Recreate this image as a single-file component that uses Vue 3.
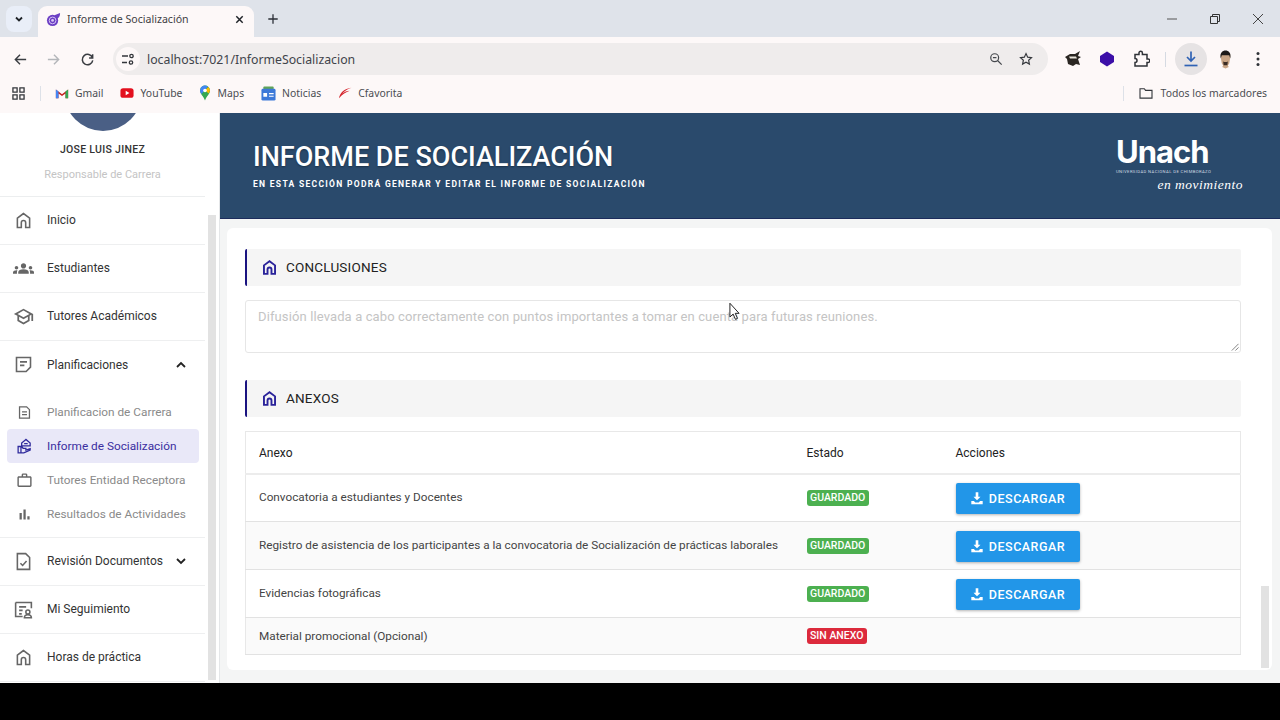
<template>
  <div class="screen">
    <!-- barra de pestañas -->
    <div class="tabstrip">
      <button class="tab-list">
        <svg viewBox="0 0 12 12" class="ic12"><path d="M3 4.500 6 7.500 9 4.500" fill="none" stroke="#1f2328" stroke-width="1.800" /></svg>
      </button>
      <div class="tab">
        <svg viewBox="0 0 16 16" class="favicon">
          <circle cx="7" cy="9" r="6" fill="#6c3fc4" />
          <circle cx="7" cy="9" r="3.600" fill="none" stroke="#d9c9f5" stroke-width="1" />
          <circle cx="7" cy="9" r="1.500" fill="#d9c9f5" />
          <path d="M9 3.500 15 1c0 3-1 5-3 6z" fill="#6c3fc4" />
        </svg>
        <span class="tab-title">Informe de Socialización</span>
        <svg viewBox="0 0 12 12" class="tab-close"><path d="M2.500 2.500l7 7M9.500 2.500l-7 7" stroke="#1f2328" stroke-width="1.600" /></svg>
      </div>
      <svg viewBox="0 0 14 14" class="tab-plus"><path d="M7 1.500v11M1.500 7h11" stroke="#2b2f36" stroke-width="1.500" /></svg>
      <div class="win-controls">
        <svg viewBox="0 0 12 12" class="ic12"><path d="M1 6h10" stroke="#555" stroke-width="1" /></svg>
        <svg viewBox="0 0 12 12" class="ic12"><path d="M1.500 3.500h7v7h-7zM3.500 3.500v-2h7v7h-2" fill="none" stroke="#333" stroke-width="1" /></svg>
        <svg viewBox="0 0 12 12" class="ic12"><path d="M1 1l10 10M11 1 1 11" stroke="#444" stroke-width="1" /></svg>
      </div>
    </div>

    <!-- barra de direcciones -->
    <div class="toolbar">
      <svg viewBox="0 0 16 16" class="nav-btn"><path d="M14 8H2.500M7.500 3l-5 5 5 5" fill="none" stroke="#3a3d42" stroke-width="1.500" /></svg>
      <svg viewBox="0 0 16 16" class="nav-btn forward"><path d="M2 8h11.500M8.500 3l5 5-5 5" fill="none" stroke="#b4b6ba" stroke-width="1.500" /></svg>
      <svg viewBox="0 0 16 16" class="nav-btn reload"><path d="M13.300 6A5.600 5.600 0 1 0 13.600 9M13.500 2.500V6.300H9.700" fill="none" stroke="#3a3d42" stroke-width="1.600" /></svg>
      <div class="omnibox">
        <span class="site-settings">
          <svg viewBox="0 0 14 14" class="ic14"><path d="M1 4h6M1 10.500h5" stroke="#33363b" stroke-width="1.400" fill="none" /><circle cx="10.500" cy="4" r="1.700" fill="none" stroke="#33363b" stroke-width="1.300" /><circle cx="10" cy="10.500" r="1.700" fill="none" stroke="#33363b" stroke-width="1.300" /></svg>
        </span>
        <span class="url">localhost:7021/InformeSocializacion</span>
        <svg viewBox="0 0 16 16" class="omni-zoom"><circle cx="6.500" cy="6.500" r="4.500" fill="none" stroke="#45484d" stroke-width="1.400" /><path d="M10 10l4.500 4.500M4.500 6.500h4" stroke="#45484d" stroke-width="1.400" /></svg>
        <svg viewBox="0 0 16 16" class="omni-star"><path d="M8 1.800l1.900 4.100 4.400.5-3.300 3 .9 4.400L8 11.600l-3.900 2.200.9-4.400-3.300-3 4.400-.5z" fill="none" stroke="#33363b" stroke-width="1.300" /></svg>
      </div>
      <svg viewBox="0 0 18 18" class="ext first"><path d="M1 7l5-3 5 0 5-3-2 5 3 1-3 2 2 6-4-1-3 2-5-2-1-5z" fill="#2a2622" /><path d="M5 6.500h7l1 2H6z" fill="#e8e4da" /></svg>
      <svg viewBox="0 0 18 18" class="ext"><path d="M9 1.500 16 6v6l-7 4.500L2 12V6z" fill="#3c0fa8" /></svg>
      <svg viewBox="0 0 18 18" class="ext"><path d="M3 4.500h4V3a1.700 1.700 0 0 1 3.400 0v1.500H15V9h1a1.800 1.800 0 0 1 0 3.600h-1V16H3v-3.500a2 2 0 0 0 0-4z" fill="none" stroke="#2f3237" stroke-width="1.500" /></svg>
      <span class="tool-sep"></span>
      <span class="download-btn">
        <svg viewBox="0 0 18 18" class="ic18"><path d="M9 1.500v9M5 7l4 4 4-4" fill="none" stroke="#2f62b4" stroke-width="1.700" /><path d="M2.500 15.500h13" stroke="#2f62b4" stroke-width="1.700" /></svg>
      </span>
      <svg viewBox="0 0 16 20" class="avatar"><path d="M8 1c4 0 5.500 2.500 5 7l-1 6-1.500 2.500 1 1.500-3.500 1.500L4.500 18l1-1.500L4 14 3 8C2.500 3.500 4 1 8 1z" fill="#c9a585" /><path d="M3 9C1.500 3 5 .5 8 .5S14.500 3 13 9l-1-3.500H4z" fill="#1d1a18" /><path d="M5.500 12c1.500 1 3.500 1 5 0l-.5 4H6z" fill="#3a2c24" /></svg>
      <svg viewBox="0 0 4 16" class="kebab"><circle cx="2" cy="2.500" r="1.500" /><circle cx="2" cy="8" r="1.500" /><circle cx="2" cy="13.500" r="1.500" /></svg>
    </div>

    <!-- marcadores -->
    <div class="bookmarks">
      <svg viewBox="0 0 14 14" class="apps"><path d="M1 1h4.500v4.500H1zM8.500 1H13v4.500H8.500zM1 8.500h4.500V13H1zM8.500 8.500H13V13H8.500z" fill="none" stroke="#33363b" stroke-width="1.400" /></svg>
      <span class="bm-sep"></span>
      <span class="bm gmail">
        <svg viewBox="0 0 16 12" class="bm-ic"><path d="M1 12V2l7 5.300L15 2v10h-3V6.500L8 9.500 4 6.500V12z" fill="#c5221f" /><path d="M1 12V2l3 2.200V12z" fill="#4285f4" /><path d="M15 12V2l-3 2.200V12z" fill="#34a853" /></svg>
        Gmail
      </span>
      <span class="bm youtube">
        <svg viewBox="0 0 16 12" class="bm-ic"><rect x="0.500" y="0.500" width="15" height="11" rx="3" fill="#e3101e" /><path d="M6.500 3.500 10.800 6l-4.300 2.500z" fill="#fff" /></svg>
        YouTube
      </span>
      <span class="bm maps">
        <svg viewBox="0 0 12 16" class="bm-ic pin"><path d="M6 0.500a5 5 0 0 1 5 5c0 3.500-3.500 5.500-5 10-1.500-4.500-5-6.500-5-10a5 5 0 0 1 5-5z" fill="#34a853" /><path d="M2 2.500a5 5 0 0 1 7-1L2.500 9C1.500 7.500 1 6.500 1 5.500z" fill="#4285f4" /><path d="M9.500 2 11 5c0 1-.5 2-1.500 3.500L6 5z" fill="#fbbc04" /><circle cx="6" cy="5.500" r="1.800" fill="#fff" /></svg>
        Maps
      </span>
      <span class="bm news">
        <svg viewBox="0 0 16 16" class="bm-ic square"><rect x="2.500" y="0.500" width="11" height="4" rx="1" fill="#5fa35a" /><rect x="0.500" y="3" width="15" height="12.500" rx="1.500" fill="#3c78d8" /><path d="M2.500 7.500h4v4h-4zM8.500 7.500h5v1.200h-5zM8.500 10.300h5v1.200h-5z" fill="#fff" /></svg>
        Noticias
      </span>
      <span class="bm cfavorita">
        <svg viewBox="0 0 16 14" class="bm-ic"><path d="M1 13C2 7 7 2 15.500 1 11 2.500 7 5 4.500 8c3-2.500 6-3.500 9-3.500C9 6 5 8.500 1 13z" fill="#d4232b" /></svg>
        Cfavorita
      </span>
      <span class="bm-sep right"></span>
      <span class="bm all">
        <svg viewBox="0 0 16 14" class="bm-ic"><path d="M1 2h5l1.500 2H15v9H1z" fill="none" stroke="#33363b" stroke-width="1.300" /></svg>
        Todos los marcadores
      </span>
    </div>

    <div class="app">
      <!-- menu lateral -->
      <aside class="sidebar">
        <div class="profile">
          <div class="photo"></div>
          <div class="user-name">JOSE LUIS JINEZ</div>
          <div class="user-role">Responsable de Carrera</div>
        </div>
        <nav class="menu">
          <template v-for="item in menu" :key="item.label">
            <div class="menu-item" :class="{ open: item.children }">
              <svg viewBox="0 0 24 24" class="menu-icon"><path :d="icons[item.icon]" :class="item.icon" /></svg>
              <span class="menu-label">{{ item.label }}</span>
              <svg v-if="item.chevron" viewBox="0 0 12 12" class="chevron">
                <path :d="item.chevron === 'up' ? 'M2 8l4-4 4 4' : 'M2 4l4 4 4-4'" />
              </svg>
            </div>
            <div v-if="item.children" class="submenu">
              <div
                v-for="sub in item.children"
                :key="sub.label"
                class="submenu-item"
                :class="{ active: sub.active }"
              >
                <svg viewBox="0 0 24 24" class="sub-icon"><path :d="icons[sub.icon]" :class="sub.icon" /></svg>
                <span>{{ sub.label }}</span>
              </div>
            </div>
          </template>
        </nav>
        <div class="side-scroll"></div>
      </aside>

      <main class="content">
        <header class="banner">
          <div class="banner-text">
            <h1>INFORME DE SOCIALIZACIÓN</h1>
            <p>EN ESTA SECCIÓN PODRÁ GENERAR Y EDITAR EL INFORME DE SOCIALIZACIÓN</p>
          </div>
          <div class="logo">
            <div class="logo-name">Unach</div>
            <div class="logo-sub">UNIVERSIDAD NACIONAL DE CHIMBORAZO</div>
            <div class="logo-slogan">en movimiento</div>
          </div>
        </header>

        <section class="card">
          <div class="section-title">
            <svg viewBox="0 0 24 24" class="title-icon"><path :d="icons.home" class="home" /></svg>
            CONCLUSIONES
          </div>
          <div class="conclusion">
            Difusión llevada a cabo correctamente con puntos importantes a tomar en cuenta para futuras reuniones.
            <svg viewBox="0 0 10 10" class="resize-grip"><path d="M9.500 2 2 9.500M9.500 6 6 9.500" stroke="#777" stroke-width="1" /></svg>
          </div>

          <div class="section-title annex">
            <svg viewBox="0 0 24 24" class="title-icon"><path :d="icons.home" class="home" /></svg>
            ANEXOS
          </div>
          <table class="annex-table">
            <thead>
              <tr>
                <th class="col-name">Anexo</th>
                <th class="col-state">Estado</th>
                <th>Acciones</th>
              </tr>
            </thead>
            <tbody>
              <tr v-for="row in anexos" :key="row.name" :class="{ short: !row.saved }">
                <td>{{ row.name }}</td>
                <td class="state-cell">
                  <span class="badge" :class="row.saved ? 'ok' : 'missing'">{{ row.saved ? 'GUARDADO' : 'SIN ANEXO' }}</span>
                </td>
                <td class="action-cell">
                  <button v-if="row.saved" class="download">
                    <svg viewBox="0 0 16 16" class="download-icon"><path d="M6.500 1.500h3v5H12L8 10.500 4 6.500h2.500zM1.500 11.500h3L6 13h4l1.500-1.500h3V15h-13z" /></svg>
                    DESCARGAR
                  </button>
                </td>
              </tr>
            </tbody>
          </table>
        </section>
        <div class="main-scroll"></div>
      </main>

      <!-- puntero del video -->
      <svg viewBox="0 0 12 20" class="cursor"><path d="M1 1v15l3.500-3.200L7 18.500l2.300-1-2.500-5.500H11z" fill="#fff" stroke="#111" stroke-width="1" /></svg>
    </div>

    <div class="black-bar"></div>
  </div>
</template>

<script setup>
const icons = {
  home: 'M12 4 5 9.300V20h4.500v-5.500a2.500 2.500 0 0 1 5 0V20H19V9.300z',
  groups:
    'M12 12.750c1.630 0 3.070.390 4.240.900 1.080.480 1.760 1.560 1.760 2.730V18H6v-1.610c0-1.180.680-2.260 1.760-2.730 1.170-.520 2.610-.910 4.240-.910zM4 13c1.100 0 2-.900 2-2s-.900-2-2-2-2 .900-2 2 .900 2 2 2zm1.130 1.100C4.760 14.040 4.390 14 4 14c-.990 0-1.930.210-2.780.580C.480 14.900 0 15.620 0 16.430V18h4.500v-1.610c0-.830.230-1.610.630-2.290zM20 13c1.100 0 2-.900 2-2s-.900-2-2-2-2 .900-2 2 .900 2 2 2zm4 3.430c0-.810-.480-1.530-1.220-1.850C21.930 14.210 20.990 14 20 14c-.390 0-.760.040-1.130.100.400.680.630 1.460.630 2.290V18H24v-1.570zM12 6c1.660 0 3 1.340 3 3s-1.340 3-3 3-3-1.340-3-3 1.340-3 3-3z',
  school:
    'M12 3 1 9l4 2.180v6L12 21l7-3.820v-6l2-1.090V17h2V9L12 3zm6.820 6L12 12.720 5.180 9 12 5.280 18.820 9zM17 15.990l-5 2.730-5-2.730v-3.720L12 15l5-2.730v3.720z',
  note: 'M4 4h16v11l-5 5H4zM8 9h8M8 13h5',
  article: 'M5 4h10l4 4v12H5zM8.500 11h7M8.500 15h7',
  report:
    'M14 2 8 7v4h12V7zM11.500 8h5M3 12h5l2 2.500h4V17l6-2v2l-9 4H3zM7 12v9',
  work: 'M20 6h-4V4c0-1.110-.890-2-2-2h-4c-1.110 0-2 .890-2 2v2H4c-1.110 0-1.990.890-1.990 2L2 19c0 1.110.890 2 2 2h16c1.110 0 2-.890 2-2V8c0-1.110-.890-2-2-2zm-6 0h-4V4h4v2zm6 13H4V8h16v11z',
  bars: 'M5 10h3.200v9H5zM10.500 5h3.200v14h-3.200zM16 14.500h3.200V19H16z',
  doc: 'M5 3h9.500L19 7.500V21H5zM8.500 14l2.500 2.500 4.500-5',
  tracking:
    'M3 4h18v6.500M3 4v16h8M7 9h8M7 13h4M7 17h3M17 12.500a2.300 2.300 0 0 1 0 4.600 2.300 2.300 0 0 1 0-4.600zM13 21.500c0-2.500 2-3.500 4-3.500s4 1 4 3.500z'
}

const menu = [
  { label: 'Inicio', icon: 'home' },
  { label: 'Estudiantes', icon: 'groups' },
  { label: 'Tutores Académicos', icon: 'school' },
  {
    label: 'Planificaciones',
    icon: 'note',
    chevron: 'up',
    children: [
      { label: 'Planificacion de Carrera', icon: 'article' },
      { label: 'Informe de Socialización', icon: 'report', active: true },
      { label: 'Tutores Entidad Receptora', icon: 'work' },
      { label: 'Resultados de Actividades', icon: 'bars' }
    ]
  },
  { label: 'Revisión Documentos', icon: 'doc', chevron: 'down' },
  { label: 'Mi Seguimiento', icon: 'tracking' },
  { label: 'Horas de práctica', icon: 'home' }
]

const anexos = [
  { name: 'Convocatoria a estudiantes y Docentes', saved: true },
  { name: 'Registro de asistencia de los participantes a la convocatoria de Socialización de prácticas laborales', saved: true },
  { name: 'Evidencias fotográficas', saved: true },
  { name: 'Material promocional (Opcional)', saved: false }
]
</script>

<style>
html,
body {
  margin: 0;
  background: #000;
}
</style>

<style scoped>
.screen {
  width: 1280px;
  height: 720px;
  display: flex;
  flex-direction: column;
  overflow: hidden;
  font-family: Roboto, "Liberation Sans", sans-serif;
  color: #222;
}
.ic12 {
  width: 12px;
  height: 12px;
}
.ic14 {
  width: 14px;
  height: 14px;
}
.ic18 {
  width: 18px;
  height: 18px;
}

/* pestañas */
.tabstrip {
  height: 37px;
  flex: none;
  background: #dfe3ea;
  display: flex;
  align-items: flex-end;
  padding-left: 6px;
  box-sizing: border-box;
}
.tab-list {
  width: 26px;
  height: 26px;
  margin-bottom: 5px;
  border: none;
  padding: 0;
  border-radius: 8px;
  background: #e9eef8;
  display: flex;
  align-items: center;
  justify-content: center;
}
.tab {
  width: 216px;
  height: 31px;
  margin-left: 6px;
  background: #fdf8f8;
  border-radius: 9px 9px 0 0;
  display: flex;
  align-items: center;
  padding: 0 9px 5px 8px;
  box-sizing: border-box;
}
.favicon {
  width: 15px;
  height: 15px;
  flex: none;
}
.tab-title {
  margin-left: 6px;
  font-family: "Noto Sans", sans-serif;
  font-size: 10.600px;
  color: #3d4043;
  flex: 1;
  white-space: nowrap;
}
.tab-close {
  width: 11px;
  height: 11px;
  flex: none;
}
.tab-plus {
  width: 12px;
  height: 12px;
  margin: 0 0 12px 13px;
}
.win-controls {
  margin-left: auto;
  margin-bottom: 12px;
  width: 98px;
  margin-right: 16px;
  display: flex;
  justify-content: space-between;
}

/* barra de direcciones */
.toolbar {
  height: 44px;
  flex: none;
  background: #fdf8f8;
  display: flex;
  align-items: center;
}
.nav-btn {
  width: 15px;
  height: 15px;
  margin-left: 13px;
  flex: none;
}
.nav-btn.forward {
  margin-left: 18px;
}
.nav-btn.reload {
  margin-left: 19px;
}
.omnibox {
  width: 935px;
  height: 32px;
  margin-left: 18px;
  border-radius: 16px;
  background: #efecec;
  display: flex;
  align-items: center;
  flex: none;
}
.site-settings {
  width: 24px;
  height: 24px;
  margin-left: 3px;
  border-radius: 50%;
  background: #fdf8f8;
  display: flex;
  align-items: center;
  justify-content: center;
}
.url {
  margin-left: 7px;
  font-family: "Noto Sans", sans-serif;
  font-size: 12.300px;
  color: #40434a;
  flex: 1;
}
.omni-zoom,
.omni-star {
  width: 14px;
  height: 14px;
  flex: none;
}
.omni-star {
  margin: 0 15px 0 16px;
}
.ext {
  width: 18px;
  height: 18px;
  margin-left: 16px;
  flex: none;
}
.tool-sep {
  width: 1px;
  height: 15px;
  background: #d5dae2;
  margin-left: 15px;
}
.download-btn {
  width: 32px;
  height: 32px;
  margin-left: 9px;
  border-radius: 50%;
  background: #e6e3e4;
  display: flex;
  align-items: center;
  justify-content: center;
  flex: none;
}
.avatar {
  width: 15px;
  height: 19px;
  margin-left: 11px;
  flex: none;
}
.kebab {
  width: 4px;
  height: 16px;
  margin-left: 23px;
  fill: #2f3237;
  flex: none;
}

/* marcadores */
.bookmarks {
  height: 32px;
  flex: none;
  background: #fdf8f8;
  display: flex;
  align-items: center;
  font-family: "Noto Sans", sans-serif;
  font-size: 10.400px;
  color: #4a4d52;
  padding: 0 0 8px 12px;
  box-sizing: border-box;
}
.apps {
  width: 13px;
  height: 13px;
  flex: none;
}
.bm-sep {
  width: 1px;
  height: 15px;
  background: #dde1e8;
  margin: 0 14px 0 15px;
}
.bm-sep.right {
  margin: 0 15px 0 auto;
}
.bm {
  display: flex;
  align-items: center;
  gap: 6px;
  white-space: nowrap;
  margin-right: 17px;
}
.bm.all {
  gap: 8px;
  margin-right: 13px;
}
.bm-ic {
  width: 14px;
  height: 12px;
  flex: none;
}
.bm-ic.pin {
  width: 12px;
  height: 16px;
}
.bm-ic.square {
  width: 15px;
  height: 15px;
}

/* aplicacion */
.app {
  height: 570px;
  flex: none;
  display: flex;
  position: relative;
  overflow: hidden;
}
.sidebar {
  width: 220px;
  flex: none;
  background: #fff;
  position: relative;
  overflow: hidden;
  border-right: 1px solid #e4e6e8;
  box-sizing: border-box;
}
.profile {
  display: flow-root;
  height: 84px;
  border-bottom: 1px solid #eceeef;
  box-sizing: border-box;
  width: 205px;
  text-align: center;
}
.photo {
  width: 78px;
  height: 78px;
  border-radius: 50%;
  background: #4a5f85;
  margin: -60px auto 0;
}
.user-name {
  margin-top: 13px;
  font-size: 10.500px;
  line-height: 12px;
  font-weight: 500;
  letter-spacing: 0.300px;
  color: #333;
}
.user-role {
  margin-top: 13px;
  font-size: 11px;
  line-height: 12px;
  color: #c4c4c4;
}
.menu {
  width: 205px;
}
.menu-item {
  height: 48px;
  display: flex;
  align-items: center;
  border-bottom: 1px solid #eeeff0;
  box-sizing: border-box;
  padding: 0 0 1px 13px;
  font-size: 12px;
  color: #333;
}
.menu-item.open {
  border-bottom: none;
}
.menu-icon {
  width: 21px;
  height: 21px;
  flex: none;
}
.menu-label {
  margin-left: 13px;
}
.home,
.note,
.article,
.doc,
.tracking,
.report {
  fill: none;
  stroke: #666;
  stroke-width: 1.800;
}
.groups,
.school,
.work,
.bars {
  fill: #666;
}
.chevron {
  width: 12px;
  height: 12px;
  margin-left: auto;
  margin-right: 18px;
  fill: none;
  stroke: #222;
  stroke-width: 1.800;
}
.submenu {
  padding: 6px 0 6px 7px;
  border-bottom: 1px solid #eeeff0;
}
.submenu-item {
  width: 192px;
  height: 34px;
  display: flex;
  align-items: center;
  font-size: 11.800px;
  color: #8a8a8a;
  padding-left: 9px;
  box-sizing: border-box;
  border-radius: 4px;
}
.submenu-item span {
  margin-left: 14px;
  white-space: nowrap;
}
.sub-icon {
  width: 17px;
  height: 17px;
  flex: none;
}
.submenu-item.active {
  background: #e9e8f8;
  color: #3a2ea0;
}
.submenu-item.active .report {
  stroke: #2f2a9c;
}
.side-scroll {
  position: absolute;
  left: 208px;
  top: 102px;
  width: 8px;
  height: 465px;
  background: #e2e2e2;
}

/* contenido */
.content {
  flex: 1;
  background: #f4f5f5;
  position: relative;
  min-width: 0;
}
.banner {
  height: 106px;
  background: #2a4a6c;
  border-bottom: 1px solid #1c2c5c;
  box-sizing: border-box;
  display: flex;
  align-items: flex-start;
  justify-content: space-between;
  padding: 0 37px 0 33px;
  color: #fff;
}
.banner-text h1 {
  margin: 29px 0 0;
  font-size: 27px;
  line-height: 30px;
  font-weight: 500;
  white-space: nowrap;
  text-shadow: 0 1px 2px rgba(0, 0, 0, 0.35);
}
.banner-text p {
  margin: 6px 0 0;
  font-size: 8.500px;
  line-height: 12px;
  font-weight: 700;
  letter-spacing: 1.300px;
  white-space: nowrap;
}
.logo {
  width: 127px;
  margin-top: 22px;
}
.logo-name {
  font-family: Inter, sans-serif;
  font-weight: 700;
  font-size: 31px;
  line-height: 34px;
  letter-spacing: -1px;
}
.logo-sub {
  font-size: 4.200px;
  line-height: 6px;
  letter-spacing: 0.400px;
  white-space: nowrap;
  color: #cfd8e2;
}
.logo-slogan {
  font-family: "Liberation Serif", serif;
  font-style: italic;
  font-size: 13.500px;
  line-height: 15px;
  margin-top: 2px;
  text-align: right;
  letter-spacing: 0.500px;
}
.card {
  width: 1045px;
  height: 442px;
  margin: 9px 0 0 7px;
  background: #fff;
  border-radius: 6px;
  padding: 21px 31px 0 18px;
  box-sizing: border-box;
}
.section-title {
  height: 37px;
  background: #f5f5f5;
  border-left: 2px solid #1a1380;
  border-radius: 2px;
  box-sizing: border-box;
  display: flex;
  align-items: center;
  padding: 0 0 2px 13px;
  font-size: 13.500px;
  font-weight: 400;
  letter-spacing: 0.200px;
  color: #222;
}
.section-title.annex {
  margin-top: 27px;
}
.title-icon {
  width: 19px;
  height: 19px;
  margin: 2px 7px 0 0;
  flex: none;
}
.title-icon .home {
  stroke: #2a239a;
  stroke-width: 2.400;
}
.conclusion {
  height: 53px;
  margin-top: 14px;
  border: 1px solid #e6e6e6;
  border-radius: 3px;
  box-sizing: border-box;
  padding: 8px 12px;
  font-size: 13px;
  line-height: 16px;
  letter-spacing: 0.120px;
  color: #c4c4c4;
  position: relative;
}
.resize-grip {
  position: absolute;
  right: 1px;
  bottom: 1px;
  width: 9px;
  height: 9px;
}
.annex-table {
  width: 100%;
  table-layout: fixed;
  margin-top: 14px;
  border-collapse: collapse;
  border: 1px solid #e8e8e8;
  font-size: 11.750px;
  color: #444;
}
.annex-table th {
  height: 42px;
  padding: 1px 0 0 13px;
  text-align: left;
  font-size: 12px;
  font-weight: 400;
  color: #222;
  border-bottom: 2px solid #ececec;
  box-sizing: border-box;
}
.annex-table th.col-name {
  width: 548px;
}
.annex-table th.col-state {
  width: 149px;
}
.annex-table td {
  height: 48px;
  padding: 0 0 2px 13px;
  border-bottom: 1px solid #e2e2e2;
  box-sizing: border-box;
  white-space: nowrap;
}
.annex-table td.state-cell,
.annex-table td.action-cell {
  padding-bottom: 0;
}
.annex-table tbody tr:nth-child(even) {
  background: #fafafa;
}
.annex-table tr.short td {
  height: 37px;
  padding-bottom: 1px;
}
.badge {
  display: inline-block;
  height: 16px;
  line-height: 16px;
  padding: 0 3.500px;
  border-radius: 3px;
  font-size: 10.500px;
  font-weight: 500;
  color: #fff;
  vertical-align: middle;
}
.badge.ok {
  background: #4cb050;
}
.badge.missing {
  background: #dc2a3c;
}
.download {
  width: 124px;
  height: 31px;
  margin-top: 1px;
  border: none;
  border-radius: 2px;
  background: #2296e8;
  color: #fff;
  font-family: inherit;
  font-size: 12.500px;
  font-weight: 500;
  letter-spacing: 0.500px;
  display: flex;
  align-items: center;
  justify-content: center;
  gap: 5px;
  padding: 0;
  box-shadow: 0 1px 3px rgba(0, 0, 0, 0.3);
}
.download-icon {
  width: 14px;
  height: 14px;
  fill: #fff;
}
.main-scroll {
  position: absolute;
  right: 11px;
  top: 473px;
  width: 8px;
  height: 82px;
  background: #e2e2e2;
}
.cursor {
  position: absolute;
  left: 729px;
  top: 189px;
  width: 11px;
  height: 19px;
}
.black-bar {
  flex: 1;
  background: #000;
}
</style>
